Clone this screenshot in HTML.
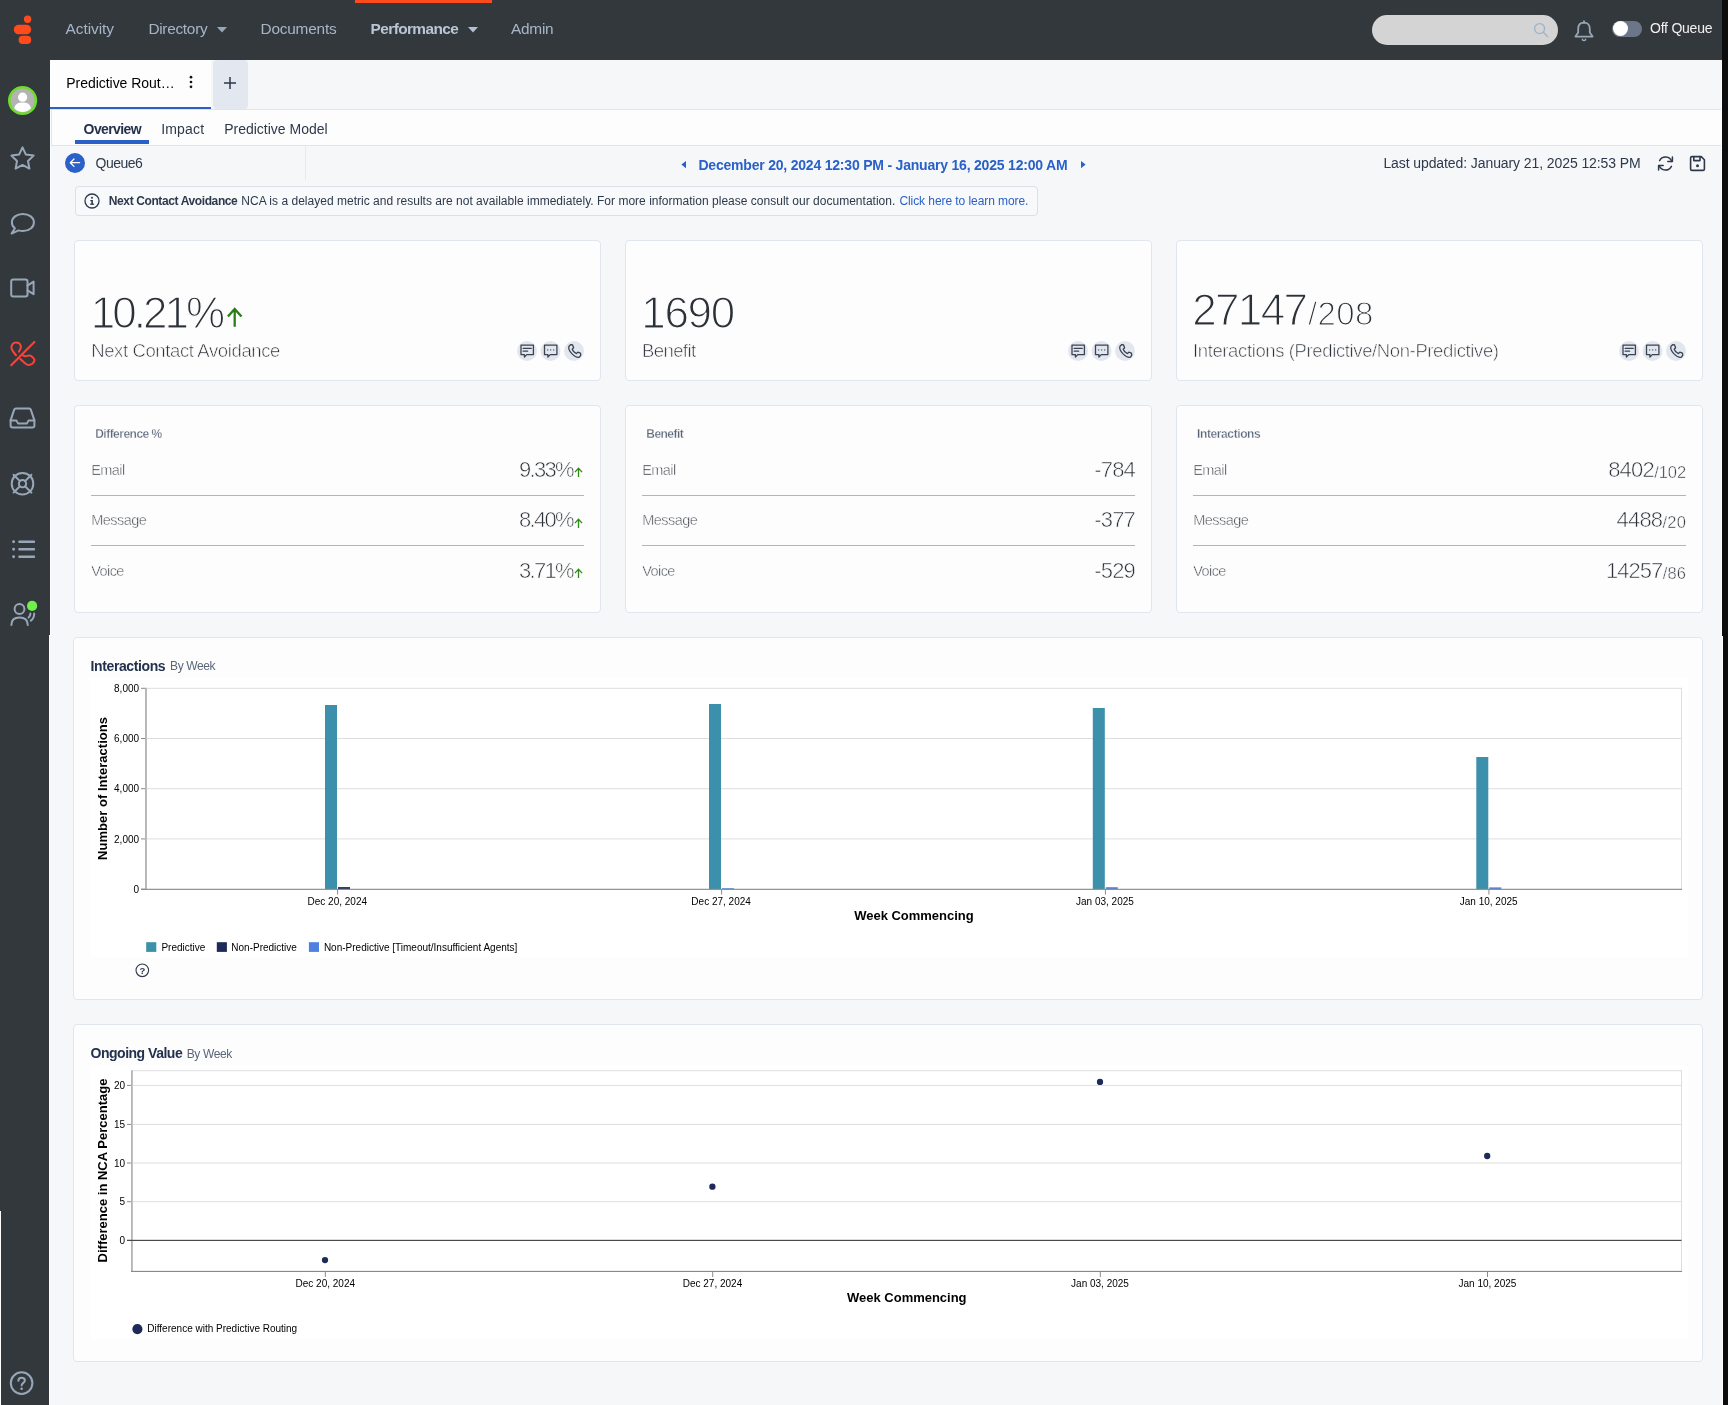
<!DOCTYPE html>
<html lang="en"><head><meta charset="utf-8"><title>Predictive Routing - Queue6</title>
<style>
html,body{margin:0;padding:0}
body{width:1728px;height:1405px;overflow:hidden;position:relative;background:#f6f7f9;font-family:"Liberation Sans",sans-serif;color:#2e394c}
.a{position:absolute}
.t{position:absolute;white-space:pre;line-height:1;font-family:"Liberation Sans",sans-serif}
.card{position:absolute;background:#fdfdfd;border:1px solid #e1e5ee;border-radius:4px;box-sizing:border-box}
.hr{position:absolute;height:1px;background:#a9b5ca}
.thin{-webkit-text-stroke:1.25px #fdfdfd}
.thin2{-webkit-text-stroke:0.6px #fdfdfd}
.thin3{-webkit-text-stroke:0.5px #fdfdfd}
.thin5{-webkit-text-stroke:0.3px #fdfdfd}
.thin4{-webkit-text-stroke:0.6px #fdfdfd}
svg{position:absolute;overflow:visible}
#tx{position:absolute;left:0;top:0;width:1728px;height:1405px;will-change:transform}
</style></head><body>
<div class="a" style="left:0px;top:0px;width:1722px;height:60px;background:#33383d;"></div>
<div class="a" style="left:355px;top:0px;width:137px;height:3px;background:#ff4a1c;"></div>
<div class="a" style="left:0px;top:60px;width:50px;height:575px;background:#33383d;"></div>
<div class="a" style="left:50px;top:60px;width:1px;height:575px;background:#fbfcfd;"></div>
<div class="a" style="left:0px;top:635px;width:49px;height:770px;background:#33383d;"></div>
<div class="a" style="left:49px;top:635px;width:1px;height:770px;background:#fbfcfd;"></div>
<div class="a" style="left:0px;top:1211px;width:1px;height:194px;background:#fff;"></div>
<div class="a" style="left:1721px;top:60px;width:1px;height:576px;background:#fbfcfd;"></div>
<div class="a" style="left:1721.7px;top:636px;width:1.6px;height:769px;background:#fff;"></div>
<div class="a" style="left:1722px;top:0px;width:6px;height:636px;background:#0d0d0d;"></div>
<div class="a" style="left:1723.3px;top:636px;width:4.7px;height:769px;background:#0d0d0d;"></div>
<svg style="left:0;top:0" width="50" height="60" viewBox="0 0 50 60">
<circle cx="27.6" cy="19.3" r="3.7" fill="#ff4a1c"/>
<rect x="13.8" y="24.8" width="17.4" height="9.5" rx="4.75" fill="#ff4a1c"/>
<rect x="18.6" y="35.8" width="12.6" height="8.2" rx="4.1" fill="#ff4a1c"/></svg>
<div class="a" style="left:1372px;top:15px;width:186px;height:30px;background:#d4d4d4;border-radius:15px"></div>
<svg style="left:1533px;top:22px" width="16" height="16" viewBox="0 0 16 16" fill="none" stroke="#9fb3c8" stroke-width="1.3">
<circle cx="6.6" cy="6.6" r="5"/><path d="M10.3 10.3 L15 15"/></svg>
<svg style="left:1572.5px;top:19.5px" width="22" height="22" viewBox="0 0 22 22" fill="none" stroke="#98a7b8" stroke-width="1.8" stroke-linecap="round" stroke-linejoin="round">
<path d="M11 2.6 C7.2 2.6 5.2 5.2 5.2 8.8 V12.6 L2.4 16.6 H19.6 L16.8 12.6 V8.8 C16.8 5.2 14.8 2.6 11 2.6 Z"/><path d="M11 1.2 V2.6"/><path d="M9.4 19.4 a1.7 1.7 0 0 0 3.2 0" stroke-width="1.6"/></svg>
<div class="a" style="left:1612.4px;top:20.5px;width:29.8px;height:16px;background:#6b7688;border-radius:8px"></div>
<div class="a" style="left:1612.8px;top:21px;width:15px;height:15px;background:#fff;border-radius:7.5px"></div>
<svg style="left:217px;top:27px" width="10" height="6"><path d="M0 0 H10 L5 5.5 Z" fill="#98a7b8"/></svg>
<svg style="left:468px;top:27px" width="10" height="6"><path d="M0 0 H10 L5 5.5 Z" fill="#b3c1d1"/></svg>
<svg style="left:8px;top:86px" width="30" height="30" viewBox="0 0 30 30">
<circle cx="14.6" cy="14.5" r="13.3" fill="#b3b3b3" stroke="#6fdb2a" stroke-width="2.6"/>
<circle cx="14.6" cy="11.2" r="4.6" fill="#fff"/>
<path d="M6.3 22.6 C6.8 18.2 10 16.6 14.6 16.6 C19.2 16.6 22.4 18.2 22.9 22.6 C20.6 25 17.8 26 14.6 26 C11.4 26 8.6 25 6.3 22.6 Z" fill="#fff"/></svg>
<svg style="left:10px;top:146px" width="25" height="24" viewBox="0 0 25 24" fill="none" stroke="#98a7b8" stroke-width="2" stroke-linecap="round" stroke-linejoin="round">
<path d="M12.5 1.4 L15.9 8.6 L23.6 9.6 L18 15 L19.4 22.6 L12.5 18.9 L5.6 22.6 L7 15 L1.4 9.6 L9.1 8.6 Z"/></svg>
<svg style="left:10px;top:212px" width="25" height="22" viewBox="0 0 25 22" fill="none" stroke="#98a7b8" stroke-width="2" stroke-linecap="round" stroke-linejoin="round">
<path d="M12.9 2 C6.6 2 1.9 5.6 1.9 10.4 C1.9 12.8 3.1 14.8 4.9 16.2 L1.6 21.6 L8.6 18.4 C10 18.8 11.4 19 12.9 19 C19.2 19 23.9 15.2 23.9 10.4 C23.9 5.6 19.2 2 12.9 2 Z"/></svg>
<svg style="left:10px;top:278px" width="25" height="20" viewBox="0 0 25 20" fill="none" stroke="#98a7b8" stroke-width="2" stroke-linecap="round" stroke-linejoin="round">
<rect x="1.2" y="1.4" width="16.3" height="17" rx="2"/><path d="M17.5 7.6 L23.6 3.6 V16.2 L17.5 12.4"/></svg>
<svg style="left:10px;top:341px" width="26" height="26" viewBox="0 0 26 26" fill="none" stroke="#ff4138" stroke-width="2.05" stroke-linecap="round" stroke-linejoin="round">
<path d="M24.4 0.95 L1.2 24.2"/>
<path d="M8.96 10.78 C9.4 9 10.89 8 10.89 6.3 C10.89 4.6 10.4 3.3 9.35 2.46 C8.4 1.7 7.2 1.43 6.02 1.43 C4.6 1.43 3.2 2.1 2.43 3.22 C1.8 4.1 1.41 5.2 1.41 6.3 C1.41 7.6 1.9 8.8 2.69 9.89 C3.7 11.3 4.9 12.9 6.02 14.24"/>
<path d="M12.93 14.24 C13.7 14.9 14.5 15.27 15.5 15.27 C16.8 15.27 17.8 14.5 19.08 14.5 C20.4 14.5 21.7 15.2 22.67 16.29 C23.5 17.1 24.46 18 24.46 19.11 C24.46 20.4 23.6 21.6 22.67 22.44 C21.5 23.4 20.1 23.98 18.57 23.98 C17.2 23.98 16 23 14.98 22.18 C13.4 20.9 11.8 19.5 10.37 18.08"/></svg>
<svg style="left:9px;top:407px" width="27" height="22" viewBox="0 0 27 22" fill="none" stroke="#98a7b8" stroke-width="2" stroke-linecap="round" stroke-linejoin="round">
<path d="M1.6 13.4 L5.2 2.6 C5.5 1.8 6.1 1.4 6.9 1.4 H20.1 C20.9 1.4 21.5 1.8 21.8 2.6 L25.4 13.4 V18.6 C25.4 19.8 24.6 20.6 23.4 20.6 H3.6 C2.4 20.6 1.6 19.8 1.6 18.6 Z"/>
<path d="M1.6 13.4 H7.4 L9 16.4 H18 L19.6 13.4 H25.4"/></svg>
<svg style="left:10px;top:471px" width="25" height="25" viewBox="0 0 25 25" fill="none" stroke="#98a7b8" stroke-width="2" stroke-linecap="round" stroke-linejoin="round">
<circle cx="12.5" cy="12.7" r="10.8"/><circle cx="12.5" cy="12.7" r="3.6"/>
<path d="M3.6 3.8 L9.9 10.1 M21.4 3.8 L15.1 10.1 M3.6 21.6 L9.9 15.3 M21.4 21.6 L15.1 15.3"/></svg>
<svg style="left:11px;top:539px" width="25" height="20" viewBox="0 0 25 20" fill="none" stroke="#98a7b8" stroke-width="2" stroke-linecap="round" stroke-linejoin="round">
<path d="M8.4 2.7 H23 M8.4 10.2 H23 M8.4 17.7 H23" stroke-width="2.4"/><path d="M2.6 2.7 h0.01 M2.6 10.2 h0.01 M2.6 17.7 h0.01" stroke-width="2.9"/></svg>
<svg style="left:10px;top:600px" width="28" height="27" viewBox="0 0 28 27" fill="none" stroke="#98a7b8" stroke-width="2" stroke-linecap="round" stroke-linejoin="round">
<circle cx="9.5" cy="9" r="4.9"/>
<path d="M1.4 25 C1.4 20.4 4.4 17.6 9.6 17.6 C14.8 17.6 17.6 20.4 17.8 25"/>
<path d="M20.4 13.6 C20.4 15.4 19.8 16.6 18.6 17.6 M24.2 13.4 C24.2 16.6 23 19 20.8 20.6"/>
<circle cx="22.1" cy="5.9" r="5.1" fill="#70f04a" stroke="none"/></svg>
<svg style="left:10px;top:1370.6px" width="24" height="24" viewBox="0 0 24 24" fill="none" stroke="#98a7b8" stroke-width="2" stroke-linecap="round" stroke-linejoin="round">
<circle cx="11.6" cy="12.1" r="10.8"/>
<path d="M8.4 9.8 C8.4 7.8 9.7 6.8 11.6 6.8 C13.6 6.8 14.9 7.9 14.9 9.5 C14.9 11.8 11.6 11.9 11.6 14.4"/><path d="M11.6 17.8 h0.01" stroke-width="2.6"/></svg>
<div class="a" style="left:50px;top:60px;width:161px;height:49px;background:#fdfdfe;"></div>
<div class="a" style="left:50px;top:107px;width:161px;height:2px;background:#2a60c8;"></div>
<div class="a" style="left:212.5px;top:60px;width:35px;height:49px;background:#e3e7f0;border-radius:4px"></div>
<div class="a" style="left:50px;top:109px;width:1671px;height:1px;background:#e0e4ec;"></div>
<svg style="left:223px;top:76px" width="14" height="14"><path d="M7 1 V13 M1 7 H13" stroke="#2e394c" stroke-width="1.5" fill="none"/></svg>
<svg style="left:188px;top:75px" width="6" height="14"><circle cx="3" cy="2.2" r="1.35" fill="#111"/><circle cx="3" cy="7" r="1.35" fill="#111"/><circle cx="3" cy="11.8" r="1.35" fill="#111"/></svg>
<div class="a" style="left:51px;top:110px;width:1670px;height:36px;background:#fdfdfd;border-left:1px solid #e1e5ee;border-bottom:1px solid #e0e4ec;box-sizing:border-box"></div>
<div class="a" style="left:75px;top:140.3px;width:74px;height:4.2px;background:#2a60c8;"></div>
<svg style="left:65px;top:153.2px" width="20" height="20" viewBox="0 0 20 20"><circle cx="10" cy="10" r="10" fill="#2a60c8"/>
<path d="M14.6 9.7 H5.6 M9 6 L5.3 9.7 L9 13.4" fill="none" stroke="#fff" stroke-width="1.3" stroke-linecap="round" stroke-linejoin="round"/></svg>
<div class="a" style="left:305px;top:146px;width:1px;height:34px;background:#e6e9ef;"></div>
<svg style="left:680px;top:160px" width="7" height="9"><path d="M6 1 V8.2 L1.4 4.6 Z" fill="#2a60c8"/></svg>
<svg style="left:1080px;top:160px" width="7" height="9"><path d="M1 1 V8.2 L5.6 4.6 Z" fill="#2a60c8"/></svg>
<svg style="left:1657px;top:155px" width="17" height="17" viewBox="0 0 17 17" fill="none" stroke="#2e394c" stroke-width="1.5" stroke-linecap="round" stroke-linejoin="round">
<path d="M14.8 6.4 A6.6 6.6 0 0 0 2.6 5.6"/><path d="M2.2 10.6 A6.6 6.6 0 0 0 14.4 11.4"/>
<path d="M15.4 2 V6.6 H10.8"/><path d="M1.6 15 V10.4 H6.2"/></svg>
<svg style="left:1689px;top:155px" width="17" height="17" viewBox="0 0 17 17" fill="none" stroke="#2e394c" stroke-width="1.6" stroke-linejoin="round">
<path d="M1.6 3 C1.6 2.2 2.2 1.6 3 1.6 H12.2 L15.4 4.8 V14 C15.4 14.8 14.8 15.4 14 15.4 H3 C2.2 15.4 1.6 14.8 1.6 14 Z"/>
<path d="M4.8 1.8 V5.6 H11 V1.8"/><circle cx="8.5" cy="10.8" r="1.5" fill="#2e394c" stroke="none"/></svg>
<div class="a" style="left:75px;top:186px;width:963px;height:29.5px;background:#f8f9fb;border:1px solid #dadfe8;border-radius:4px;box-sizing:border-box"></div>
<svg style="left:84px;top:193px" width="16" height="16" viewBox="0 0 16 16"><circle cx="8" cy="8" r="7" fill="none" stroke="#2e394c" stroke-width="1.3"/>
<rect x="7.3" y="7" width="1.6" height="4.4" fill="#2e394c"/><rect x="6.3" y="7" width="2" height="1.2" fill="#2e394c"/><rect x="6.1" y="10.6" width="4" height="1.2" fill="#2e394c"/><circle cx="8" cy="4.7" r="1" fill="#2e394c"/></svg>
<div class="card" style="left:74.0px;top:240px;width:527px;height:141px"></div>
<div class="card" style="left:74.0px;top:405px;width:527px;height:208px"></div>
<div class="hr" style="left:91.0px;top:495px;width:493px"></div>
<div class="hr" style="left:91.0px;top:545px;width:493px"></div>
<div class="card" style="left:625.0px;top:240px;width:527px;height:141px"></div>
<div class="card" style="left:625.0px;top:405px;width:527px;height:208px"></div>
<div class="hr" style="left:642.0px;top:495px;width:493px"></div>
<div class="hr" style="left:642.0px;top:545px;width:493px"></div>
<div class="card" style="left:1176.0px;top:240px;width:527px;height:141px"></div>
<div class="card" style="left:1176.0px;top:405px;width:527px;height:208px"></div>
<div class="hr" style="left:1193.0px;top:495px;width:493px"></div>
<div class="hr" style="left:1193.0px;top:545px;width:493px"></div>
<svg style="left:517.0px;top:340.8px" width="68" height="20" viewBox="0 0 68 20"><circle cx="10" cy="10" r="10" fill="#e2e6ef"/><circle cx="33.5" cy="10" r="10" fill="#e2e6ef"/><circle cx="57" cy="10" r="10" fill="#e2e6ef"/><path fill="none" stroke="#3b4250" stroke-width="1.3" stroke-linejoin="round" stroke-linecap="round" d="M4 4.2 H16.4 V13.6 H9.8 L7.4 16 V13.6 H4 Z"/><path fill="none" stroke="#3b4250" stroke-width="1.3" stroke-linejoin="round" stroke-linecap="round" stroke-width="1.1" d="M6.2 7.4 H14.2 M6.2 10.2 H10.6"/><g transform="translate(23.5 0)"><path fill="none" stroke="#3b4250" stroke-width="1.3" stroke-linejoin="round" stroke-linecap="round" d="M4 4.2 H16.4 V13.6 H9.8 L7.4 16 V13.6 H4 Z"/><path fill="none" stroke="#3b4250" stroke-width="1.3" stroke-linejoin="round" stroke-linecap="round" stroke-width="1.5" d="M7.2 8.9 h0.01 M10.2 8.9 h0.01 M13.2 8.9 h0.01"/></g><g transform="translate(47 0)"><path fill="none" stroke="#3b4250" stroke-width="1.3" stroke-linejoin="round" stroke-linecap="round" d="M5 5.2 L6.8 3.6 L8.6 4 L9.6 6.8 L8.2 8.2 C8.8 10 10.6 11.8 12.4 12.6 L13.8 11.2 L16.4 12.2 L16.8 14.2 L15.4 16.2 C13.6 16.6 10.2 15 7.8 12.6 C5.6 10.2 4.2 7.2 5 5.2 Z"/></g></svg>
<svg style="left:1068.0px;top:340.8px" width="68" height="20" viewBox="0 0 68 20"><circle cx="10" cy="10" r="10" fill="#e2e6ef"/><circle cx="33.5" cy="10" r="10" fill="#e2e6ef"/><circle cx="57" cy="10" r="10" fill="#e2e6ef"/><path fill="none" stroke="#3b4250" stroke-width="1.3" stroke-linejoin="round" stroke-linecap="round" d="M4 4.2 H16.4 V13.6 H9.8 L7.4 16 V13.6 H4 Z"/><path fill="none" stroke="#3b4250" stroke-width="1.3" stroke-linejoin="round" stroke-linecap="round" stroke-width="1.1" d="M6.2 7.4 H14.2 M6.2 10.2 H10.6"/><g transform="translate(23.5 0)"><path fill="none" stroke="#3b4250" stroke-width="1.3" stroke-linejoin="round" stroke-linecap="round" d="M4 4.2 H16.4 V13.6 H9.8 L7.4 16 V13.6 H4 Z"/><path fill="none" stroke="#3b4250" stroke-width="1.3" stroke-linejoin="round" stroke-linecap="round" stroke-width="1.5" d="M7.2 8.9 h0.01 M10.2 8.9 h0.01 M13.2 8.9 h0.01"/></g><g transform="translate(47 0)"><path fill="none" stroke="#3b4250" stroke-width="1.3" stroke-linejoin="round" stroke-linecap="round" d="M5 5.2 L6.8 3.6 L8.6 4 L9.6 6.8 L8.2 8.2 C8.8 10 10.6 11.8 12.4 12.6 L13.8 11.2 L16.4 12.2 L16.8 14.2 L15.4 16.2 C13.6 16.6 10.2 15 7.8 12.6 C5.6 10.2 4.2 7.2 5 5.2 Z"/></g></svg>
<svg style="left:1619.0px;top:340.8px" width="68" height="20" viewBox="0 0 68 20"><circle cx="10" cy="10" r="10" fill="#e2e6ef"/><circle cx="33.5" cy="10" r="10" fill="#e2e6ef"/><circle cx="57" cy="10" r="10" fill="#e2e6ef"/><path fill="none" stroke="#3b4250" stroke-width="1.3" stroke-linejoin="round" stroke-linecap="round" d="M4 4.2 H16.4 V13.6 H9.8 L7.4 16 V13.6 H4 Z"/><path fill="none" stroke="#3b4250" stroke-width="1.3" stroke-linejoin="round" stroke-linecap="round" stroke-width="1.1" d="M6.2 7.4 H14.2 M6.2 10.2 H10.6"/><g transform="translate(23.5 0)"><path fill="none" stroke="#3b4250" stroke-width="1.3" stroke-linejoin="round" stroke-linecap="round" d="M4 4.2 H16.4 V13.6 H9.8 L7.4 16 V13.6 H4 Z"/><path fill="none" stroke="#3b4250" stroke-width="1.3" stroke-linejoin="round" stroke-linecap="round" stroke-width="1.5" d="M7.2 8.9 h0.01 M10.2 8.9 h0.01 M13.2 8.9 h0.01"/></g><g transform="translate(47 0)"><path fill="none" stroke="#3b4250" stroke-width="1.3" stroke-linejoin="round" stroke-linecap="round" d="M5 5.2 L6.8 3.6 L8.6 4 L9.6 6.8 L8.2 8.2 C8.8 10 10.6 11.8 12.4 12.6 L13.8 11.2 L16.4 12.2 L16.8 14.2 L15.4 16.2 C13.6 16.6 10.2 15 7.8 12.6 C5.6 10.2 4.2 7.2 5 5.2 Z"/></g></svg>
<svg style="left:226px;top:306px" width="18" height="22" viewBox="0 0 18 22" fill="none" stroke="#2a7d18" stroke-width="2.3"><path d="M8.7 20.7 V3 M1.9 10.6 L8.7 2.9 L15.5 10.6"/></svg>
<svg style="left:574px;top:467px" width="9" height="10" viewBox="0 0 9 10" fill="none" stroke="#2f8a1c" stroke-width="1.3" stroke-linecap="butt" stroke-linejoin="miter"><path d="M4.5 10 V1.2 M0.9 5.1 L4.5 1.2 L8.1 5.1"/></svg>
<svg style="left:574px;top:517.5px" width="9" height="10" viewBox="0 0 9 10" fill="none" stroke="#2f8a1c" stroke-width="1.3" stroke-linecap="butt" stroke-linejoin="miter"><path d="M4.5 10 V1.2 M0.9 5.1 L4.5 1.2 L8.1 5.1"/></svg>
<svg style="left:574px;top:568px" width="9" height="10" viewBox="0 0 9 10" fill="none" stroke="#2f8a1c" stroke-width="1.3" stroke-linecap="butt" stroke-linejoin="miter"><path d="M4.5 10 V1.2 M0.9 5.1 L4.5 1.2 L8.1 5.1"/></svg>
<div class="card" style="left:73px;top:637px;width:1630px;height:362.5px"></div>
<div class="card" style="left:73px;top:1024px;width:1630px;height:338px"></div>
<div class="a" style="left:90px;top:678px;width:1598px;height:279px;background:#fff;"></div>
<div class="a" style="left:90px;top:1065px;width:1598px;height:274px;background:#fff;"></div>
<svg style="left:0;top:0" width="1728" height="1405" viewBox="0 0 1728 1405"><rect x="147" y="687.8" width="1534.5" height="1" fill="#dedede"/><rect x="141" y="687.8" width="5" height="1" fill="#8a8a8a"/><rect x="147" y="738.0" width="1534.5" height="1" fill="#dedede"/><rect x="141" y="738.0" width="5" height="1" fill="#8a8a8a"/><rect x="147" y="788.2" width="1534.5" height="1" fill="#dedede"/><rect x="141" y="788.2" width="5" height="1" fill="#8a8a8a"/><rect x="147" y="838.4" width="1534.5" height="1" fill="#dedede"/><rect x="141" y="838.4" width="5" height="1" fill="#8a8a8a"/><rect x="141" y="888.7" width="5" height="1" fill="#8a8a8a"/><rect x="1681.0" y="687.8" width="1" height="201" fill="#dedede"/><rect x="145.05" y="687.8" width="1.85" height="202" fill="#b4b4b4"/><rect x="325" y="705" width="12" height="184.20000000000005" fill="#3c90ab"/><rect x="338" y="887.1" width="12" height="2.2999999999999545" fill="#1e2b58"/><rect x="337.1" y="889.5" width="1" height="5" fill="#8a8a8a"/><rect x="709" y="704" width="12" height="185.20000000000005" fill="#3c90ab"/><rect x="722" y="888.2" width="12" height="1.1999999999999318" fill="#4f80e0"/><rect x="721.1" y="889.5" width="1" height="5" fill="#8a8a8a"/><rect x="1092.8" y="708" width="12" height="181.20000000000005" fill="#3c90ab"/><rect x="1105.8" y="887.2" width="12" height="2.199999999999932" fill="#4f80e0"/><rect x="1104.8999999999999" y="889.5" width="1" height="5" fill="#8a8a8a"/><rect x="1476.3" y="757" width="12" height="132.20000000000005" fill="#3c90ab"/><rect x="1489.3" y="887.4" width="12" height="2.0" fill="#4f80e0"/><rect x="1488.3999999999999" y="889.5" width="1" height="5" fill="#8a8a8a"/><rect x="141" y="888.75" width="1541.0" height="1.15" fill="#8a8a8a"/><rect x="146.2" y="942.2" width="10.1" height="9.7" fill="#3c90ab"/><rect x="216.8" y="942.2" width="10.1" height="9.7" fill="#1e2b58"/><rect x="308.9" y="942.2" width="10.1" height="9.7" fill="#4f80e0"/><circle cx="142.3" cy="970.3" r="6.3" fill="none" stroke="#2e394c" stroke-width="1.1"/></svg>
<svg style="left:0;top:0" width="1728" height="1405" viewBox="0 0 1728 1405"><rect x="133" y="1084.9" width="1548.5" height="1" fill="#dedede"/><rect x="127" y="1084.9" width="5" height="1" fill="#8a8a8a"/><rect x="133" y="1123.9" width="1548.5" height="1" fill="#dedede"/><rect x="127" y="1123.9" width="5" height="1" fill="#8a8a8a"/><rect x="133" y="1162.5" width="1548.5" height="1" fill="#dedede"/><rect x="127" y="1162.5" width="5" height="1" fill="#8a8a8a"/><rect x="133" y="1201.2" width="1548.5" height="1" fill="#dedede"/><rect x="127" y="1201.2" width="5" height="1" fill="#8a8a8a"/><rect x="127" y="1239.9" width="5" height="1" fill="#8a8a8a"/><rect x="133" y="1070.2" width="1548.5" height="1" fill="#dedede"/><rect x="1681.0" y="1070.2" width="1" height="201" fill="#dedede"/><rect x="131" y="1070.2" width="1.8" height="201.8" fill="#b4b4b4"/><rect x="131" y="1270.85" width="1551.0" height="1.15" fill="#8a8a8a"/><rect x="127" y="1239.8" width="1554.5" height="1.2" fill="#4a4a4a"/><circle cx="325" cy="1260.1" r="3.15" fill="#1e2b58"/><rect x="324.8" y="1272" width="1" height="5" fill="#8a8a8a"/><circle cx="712.4" cy="1186.7" r="3.15" fill="#1e2b58"/><rect x="712.1999999999999" y="1272" width="1" height="5" fill="#8a8a8a"/><circle cx="1100" cy="1081.9" r="3.15" fill="#1e2b58"/><rect x="1099.8" y="1272" width="1" height="5" fill="#8a8a8a"/><circle cx="1487.2" cy="1156" r="3.15" fill="#1e2b58"/><rect x="1487.0" y="1272" width="1" height="5" fill="#8a8a8a"/><circle cx="137.4" cy="1329.1" r="5.1" fill="#1e2b58"/></svg>
<div id="tx">
<span class="t" style="left:65.60px;top:20.96px;font-size:15.4px;color:#a6b6c7;letter-spacing:-0.044px;">Activity</span>
<span class="t" style="left:148.40px;top:20.96px;font-size:15.4px;color:#a6b6c7;letter-spacing:-0.286px;">Directory</span>
<span class="t" style="left:260.50px;top:20.96px;font-size:15.4px;color:#a6b6c7;letter-spacing:-0.205px;">Documents</span>
<span class="t" style="left:370.60px;top:20.96px;font-size:15.4px;color:#b9c6d4;font-weight:700;letter-spacing:-0.592px;">Performance</span>
<span class="t" style="left:511.00px;top:20.96px;font-size:15.4px;color:#a6b6c7;letter-spacing:-0.245px;">Admin</span>
<span class="t" style="left:1650.00px;top:21.05px;font-size:14px;color:#f4f0f2;letter-spacing:-0.227px;">Off Queue</span>
<span class="t" style="left:66.30px;top:75.75px;font-size:14px;color:#000;letter-spacing:-0.040px;">Predictive Rout…</span>
<span class="t" style="left:83.60px;top:121.65px;font-size:14px;color:#23314d;font-weight:700;letter-spacing:-0.608px;">Overview</span>
<span class="t" style="left:161.20px;top:121.65px;font-size:14px;color:#2e394c;letter-spacing:0.164px;">Impact</span>
<span class="t" style="left:224.20px;top:121.65px;font-size:14px;color:#2e394c;">Predictive Model</span>
<span class="t" style="left:95.60px;top:156.15px;font-size:14px;color:#2e394c;letter-spacing:-0.505px;">Queue6</span>
<span class="t" style="left:698.40px;top:158.35px;font-size:14px;color:#2a60c8;font-weight:700;letter-spacing:-0.205px;">December 20, 2024 12:30 PM - January 16, 2025 12:00 AM</span>
<span class="t" style="left:1383.40px;top:156.15px;font-size:14px;color:#2e394c;letter-spacing:-0.091px;">Last updated: January 21, 2025 12:53 PM</span>
<span class="t" style="left:108.80px;top:195.14px;font-size:12px;color:#2e394c;font-weight:700;letter-spacing:-0.388px;">Next Contact Avoidance</span>
<span class="t" style="left:241.30px;top:195.14px;font-size:12px;color:#2e394c;letter-spacing:0.016px;">NCA is a delayed metric and results are not available immediately. For more information please consult our documentation.</span>
<span class="t" style="left:899.40px;top:195.14px;font-size:12px;color:#2a60c8;letter-spacing:-0.069px;">Click here to learn more.</span>
<span class="t thin" style="left:90.80px;top:291.35px;font-size:44px;color:#2c3138;letter-spacing:-2.972px;">10.21%</span>
<span class="t thin4" style="left:91.20px;top:341.64px;font-size:18.5px;color:#2c3138;letter-spacing:-0.378px;">Next Contact Avoidance</span>
<span class="t thin" style="left:641.20px;top:291.35px;font-size:44px;color:#2c3138;letter-spacing:-1.273px;">1690</span>
<span class="t thin4" style="left:642.00px;top:341.64px;font-size:18.5px;color:#2c3138;letter-spacing:-0.587px;">Benefit</span>
<span class="t thin" style="left:1192.20px;top:288.25px;font-size:44px;color:#2c3138;letter-spacing:-1.632px;">27147</span>
<span class="t thin" style="left:1308.00px;top:297.47px;font-size:33px;color:#2c3138;letter-spacing:0.391px;">/208</span>
<span class="t thin4" style="left:1193.00px;top:341.64px;font-size:18.5px;color:#2c3138;letter-spacing:-0.380px;">Interactions (Predictive/Non-Predictive)</span>
<span class="t thin5" style="left:95.20px;top:427.84px;font-size:12px;color:#5a6578;font-weight:700;letter-spacing:-0.517px;">Difference %</span>
<span class="t thin3" style="left:91.30px;top:462.63px;font-size:14.5px;color:#2c3138;letter-spacing:-0.613px;">Email</span>
<span class="t thin3" style="left:91.30px;top:513.03px;font-size:14.5px;color:#2c3138;letter-spacing:-0.549px;">Message</span>
<span class="t thin3" style="left:91.30px;top:564.03px;font-size:14.5px;color:#2c3138;letter-spacing:-0.597px;">Voice</span>
<span class="t thin5" style="left:646.30px;top:427.84px;font-size:12px;color:#5a6578;font-weight:700;letter-spacing:-0.539px;">Benefit</span>
<span class="t thin3" style="left:642.30px;top:462.63px;font-size:14.5px;color:#2c3138;letter-spacing:-0.613px;">Email</span>
<span class="t thin3" style="left:642.30px;top:513.03px;font-size:14.5px;color:#2c3138;letter-spacing:-0.549px;">Message</span>
<span class="t thin3" style="left:642.30px;top:564.03px;font-size:14.5px;color:#2c3138;letter-spacing:-0.597px;">Voice</span>
<span class="t thin5" style="left:1197.10px;top:427.84px;font-size:12px;color:#5a6578;font-weight:700;letter-spacing:-0.401px;">Interactions</span>
<span class="t thin3" style="left:1193.30px;top:462.63px;font-size:14.5px;color:#2c3138;letter-spacing:-0.613px;">Email</span>
<span class="t thin3" style="left:1193.30px;top:513.03px;font-size:14.5px;color:#2c3138;letter-spacing:-0.549px;">Message</span>
<span class="t thin3" style="left:1193.30px;top:564.03px;font-size:14.5px;color:#2c3138;letter-spacing:-0.597px;">Voice</span>
<span class="t thin2" style="left:519.00px;top:458.98px;font-size:22px;color:#2c3138;letter-spacing:-1.678px;">9.33%</span>
<span class="t thin2" style="left:519.00px;top:509.38px;font-size:22px;color:#2c3138;letter-spacing:-1.678px;">8.40%</span>
<span class="t thin2" style="left:519.00px;top:559.78px;font-size:22px;color:#2c3138;letter-spacing:-1.678px;">3.71%</span>
<span class="t thin2" style="left:1094.20px;top:458.98px;font-size:22px;color:#2c3138;letter-spacing:-0.812px;">-784</span>
<span class="t thin2" style="left:1094.20px;top:509.38px;font-size:22px;color:#2c3138;letter-spacing:-0.812px;">-377</span>
<span class="t thin2" style="left:1094.20px;top:559.78px;font-size:22px;color:#2c3138;letter-spacing:-0.812px;">-529</span>
<span class="t thin3" style="left:1654.20px;top:463.73px;font-size:16.5px;color:#2c3138;letter-spacing:-0.081px;">/102</span>
<span class="t thin2" style="left:1608.20px;top:458.98px;font-size:22px;color:#2c3138;letter-spacing:-0.838px;">8402</span>
<span class="t thin3" style="left:1662.60px;top:514.13px;font-size:16.5px;color:#2c3138;letter-spacing:0.154px;">/20</span>
<span class="t thin2" style="left:1616.60px;top:509.38px;font-size:22px;color:#2c3138;letter-spacing:-0.838px;">4488</span>
<span class="t thin3" style="left:1662.80px;top:564.53px;font-size:16.5px;color:#2c3138;letter-spacing:0.087px;">/86</span>
<span class="t thin2" style="left:1606.00px;top:559.78px;font-size:22px;color:#2c3138;letter-spacing:-0.958px;">14257</span>
<span class="t" style="left:90.60px;top:658.75px;font-size:14px;color:#23314d;font-weight:700;letter-spacing:-0.397px;">Interactions</span>
<span class="t" style="left:170.10px;top:660.44px;font-size:12px;color:#5a6578;letter-spacing:-0.385px;">By Week</span>
<span class="t" style="left:114.07px;top:684.03px;font-size:10px;color:#000;">8,000</span>
<span class="t" style="left:114.07px;top:734.24px;font-size:10px;color:#000;">6,000</span>
<span class="t" style="left:114.07px;top:784.44px;font-size:10px;color:#000;">4,000</span>
<span class="t" style="left:114.07px;top:834.63px;font-size:10px;color:#000;">2,000</span>
<span class="t" style="left:133.54px;top:884.94px;font-size:10px;color:#000;">0</span>
<span class="t" style="left:307.55px;top:896.63px;font-size:10px;color:#000;">Dec 20, 2024</span>
<span class="t" style="left:691.35px;top:896.63px;font-size:10px;color:#000;">Dec 27, 2024</span>
<span class="t" style="left:1075.99px;top:896.63px;font-size:10px;color:#000;">Jan 03, 2025</span>
<span class="t" style="left:1459.79px;top:896.63px;font-size:10px;color:#000;">Jan 10, 2025</span>
<span class="t" style="left:854.20px;top:909.30px;font-size:13px;color:#000;font-weight:700;letter-spacing:-0.019px;">Week Commencing</span>
<span class="t" style="left:31.20px;top:781.90px;font-size:13px;color:#000;font-weight:700;letter-spacing:0.032px;transform:rotate(-90deg);transform-origin:50% 50%;">Number of Interactions</span>
<span class="t" style="left:161.40px;top:942.53px;font-size:10px;color:#000;">Predictive</span>
<span class="t" style="left:231.30px;top:942.53px;font-size:10px;color:#000;">Non-Predictive</span>
<span class="t" style="left:323.90px;top:942.53px;font-size:10px;color:#000;">Non-Predictive [Timeout/Insufficient Agents]</span>
<span class="t" style="left:139.49px;top:965.56px;font-size:9.5px;color:#2e394c;font-weight:700;">?</span>
<span class="t" style="left:90.60px;top:1045.85px;font-size:14px;color:#23314d;font-weight:700;letter-spacing:-0.494px;">Ongoing Value</span>
<span class="t" style="left:186.70px;top:1047.54px;font-size:12px;color:#5a6578;letter-spacing:-0.371px;">By Week</span>
<span class="t" style="left:113.97px;top:1081.14px;font-size:10px;color:#000;">20</span>
<span class="t" style="left:113.97px;top:1120.14px;font-size:10px;color:#000;">15</span>
<span class="t" style="left:113.97px;top:1158.74px;font-size:10px;color:#000;">10</span>
<span class="t" style="left:119.54px;top:1197.44px;font-size:10px;color:#000;">5</span>
<span class="t" style="left:119.54px;top:1235.94px;font-size:10px;color:#000;">0</span>
<span class="t" style="left:295.55px;top:1278.74px;font-size:10px;color:#000;">Dec 20, 2024</span>
<span class="t" style="left:682.75px;top:1278.74px;font-size:10px;color:#000;">Dec 27, 2024</span>
<span class="t" style="left:1071.09px;top:1278.74px;font-size:10px;color:#000;">Jan 03, 2025</span>
<span class="t" style="left:1458.49px;top:1278.74px;font-size:10px;color:#000;">Jan 10, 2025</span>
<span class="t" style="left:847.10px;top:1291.00px;font-size:13px;color:#000;font-weight:700;letter-spacing:-0.019px;">Week Commencing</span>
<span class="t" style="left:10.85px;top:1163.80px;font-size:13px;color:#000;font-weight:700;transform:rotate(-90deg);transform-origin:50% 50%;">Difference in NCA Percentage</span>
<span class="t" style="left:147.30px;top:1324.13px;font-size:10px;color:#000;">Difference with Predictive Routing</span>
</div>
</body></html>
